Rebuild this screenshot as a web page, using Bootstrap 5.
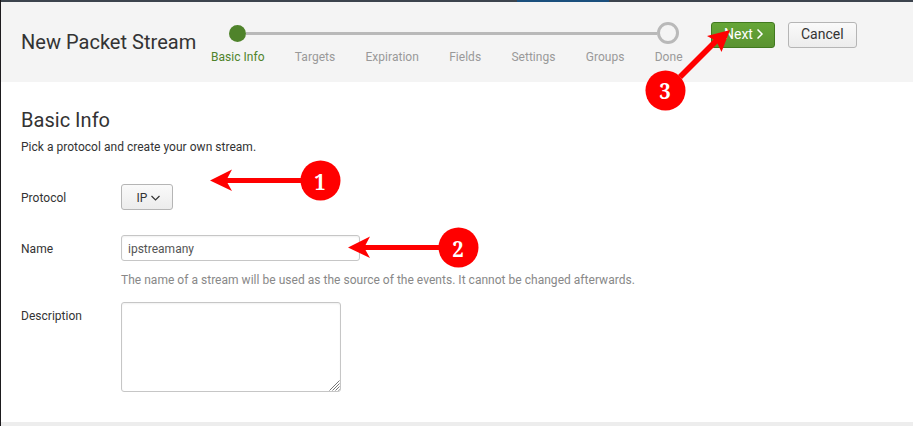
<!DOCTYPE html>
<html lang="en">
<head>
<meta charset="utf-8">
<title>New Packet Stream</title>
<meta name="viewport" content="width=device-width, initial-scale=1">
<link href="https://cdn.jsdelivr.net/npm/bootstrap@5.3.0/dist/css/bootstrap.min.css" rel="stylesheet">
<style>
body{font-family:Roboto,"Liberation Sans",sans-serif;font-size:12px;line-height:20px;letter-spacing:.025px;color:#333;width:914px;height:426px;overflow:hidden}
.app-frame{width:913px;height:426px;border-left:1px solid #1d1b1e}
.top-strip{height:2px;background:linear-gradient(90deg,#3c444d 516px,#1a4f7d 516px,#1a4f7d 608px,#3c444d 608px)}
.wizard-head{height:80px;background:#f4f4f4;padding-left:20px}
.wizard-title{width:190px;font-size:20px;line-height:24px;padding-top:28px;margin:0;font-weight:400}
.stepper{width:472px;padding-top:20px}
.rail{height:22px;margin:0 4px 0 18px}
.rail-line{height:3px;background:#b9b9b9}
.dot-on{width:17px;height:17px;background:#4f832b}
.dot-end{width:22px;height:22px;border:3px solid #b9b9b9}
.step-names{gap:30.3px;color:#999;padding-top:3px}
.step-names .current{color:#4f832b}
.btn-ui{--bs-btn-padding-y:0;--bs-btn-padding-x:12px;--bs-btn-font-size:14px;--bs-btn-line-height:22px;--bs-btn-border-radius:3px;--bs-btn-color:#333;--bs-btn-border-color:#b5b5b5;height:26px;background:linear-gradient(#fafafa,#ececec)}
.btn-next,.cancel{padding-bottom:2px;line-height:20px}
.btn-next{--bs-btn-color:#fff;--bs-btn-border-color:#41791f;width:64px;margin-right:13px;background:linear-gradient(#65a637,#5a9231)}
.cancel{width:69px}
.content-area{height:340px;padding:25px 20px 0}
.section-title{font-size:20px;line-height:26px;margin:0;font-weight:400}
.intro{margin-top:4px}
.label-col{width:100px}
.label-col.lowered{padding-top:2px}
.protocol-row{margin-top:27px}
.protocol{--bs-btn-font-size:12px;width:52px;padding:1px 0 0 3px}
.name-row{margin-top:25px}
.hint-row{margin-top:9px}
.desc-row{margin-top:12px}
.field{font-size:12px;border:1px solid #c6c6c6;border-radius:3px;color:#555;box-shadow:inset 0 1px 2px rgba(0,0,0,.06)}
.name-field{width:239px;height:26px;padding:1px 6px 0}
.desc-field{width:220px;height:90px;min-height:90px;resize:none}
.grip{right:1px;bottom:1px}
.hint{color:#888}
.foot-strip{height:4px;background:#ededed}
.notes text{font:bold 22px "Noto Serif","DejaVu Serif",serif;fill:#fff;text-anchor:middle}
</style>
<script src="https://cdn.jsdelivr.net/npm/bootstrap@5.3.0/dist/js/bootstrap.bundle.min.js"></script>
</head>
<body class="bg-white position-relative">
<div class="app-frame d-flex flex-column">
  <div class="top-strip flex-shrink-0"></div>
  <header class="wizard-head d-flex flex-shrink-0">
    <h1 class="wizard-title text-nowrap">New Packet Stream</h1>
    <div class="stepper">
      <div class="rail d-flex align-items-center">
        <span class="dot-on rounded-circle"></span><span class="rail-line flex-grow-1"></span><span class="dot-end rounded-circle"></span>
      </div>
      <div class="step-names d-flex text-nowrap">
        <span class="current">Basic Info</span><span>Targets</span><span>Expiration</span><span>Fields</span><span>Settings</span><span>Groups</span><span>Done</span>
      </div>
    </div>
    <div class="d-flex align-items-start pt-3 mt-1 ms-4 ps-1">
      <button type="button" class="btn btn-ui btn-next d-flex align-items-center text-nowrap">Next<svg class="ms-1 flex-shrink-0" width="7" height="10" viewBox="0 0 7 10" fill="none" stroke="currentColor" stroke-width="1.5"><path d="M.5 .5L5 5 .5 9.500"/></svg></button>
      <button type="button" class="btn btn-ui cancel d-flex align-items-center">Cancel</button>
    </div>
  </header>
  <main class="content-area flex-shrink-0">
    <h2 class="section-title">Basic Info</h2>
    <p class="intro mb-0">Pick a protocol and create your own stream.</p>
    <div class="d-flex align-items-center protocol-row">
      <span class="label-col lowered">Protocol</span>
      <button type="button" class="btn btn-ui protocol d-flex align-items-center justify-content-center">IP<svg class="ms-1" width="9" height="6" viewBox="0 0 9 6" fill="none" stroke="currentColor" stroke-width="1.2"><path d="M.5 1l4 4 4-4"/></svg></button>
    </div>
    <div class="d-flex align-items-center name-row">
      <label class="label-col lowered" for="name">Name</label>
      <input id="name" class="form-control field name-field" value="ipstreamany">
    </div>
    <div class="d-flex hint-row"><span class="label-col"></span><span class="hint">The name of a stream will be used as the source of the events. It cannot be changed afterwards.</span></div>
    <div class="d-flex desc-row">
      <label class="label-col pt-1" for="desc">Description</label>
      <div class="position-relative">
        <textarea id="desc" class="form-control field desc-field"></textarea>
        <svg class="grip position-absolute" width="11" height="11" viewBox="0 0 11 11" stroke="#777" stroke-width="1"><path d="M.5 10.500l10-10M3.500 10.500l7-7M6.500 10.500l4-4M9.500 10.500l1-1"/></svg>
      </div>
    </div>
  </main>
  <div class="foot-strip flex-shrink-0"></div>
</div>
<svg class="notes position-absolute top-0 start-0 pe-none" width="914" height="426" viewBox="0 0 914 426">
  <g fill="red" stroke="none">
    <path d="M210 180.500L232 169.500 227.500 178H305V183H227.500L232 191Z"/>
    <path d="M348 247.500L370 236.500 365.500 245H443V250H365.500L370 258Z"/>
    <path d="M730 30L721.500 52 717.500 43.500 682 79 678 75 713.500 39.500 707 36Z"/>
    <circle cx="320.500" cy="180.500" r="20"/><circle cx="458.500" cy="247.500" r="20"/><circle cx="665.500" cy="90.500" r="20"/>
  </g>
  <text transform="translate(320 190) scale(.92 1)">1</text>
  <text transform="translate(458 257) scale(.92 1)">2</text>
  <text transform="translate(665 99) scale(.92 1)">3</text>
</svg>
</body>
</html>
